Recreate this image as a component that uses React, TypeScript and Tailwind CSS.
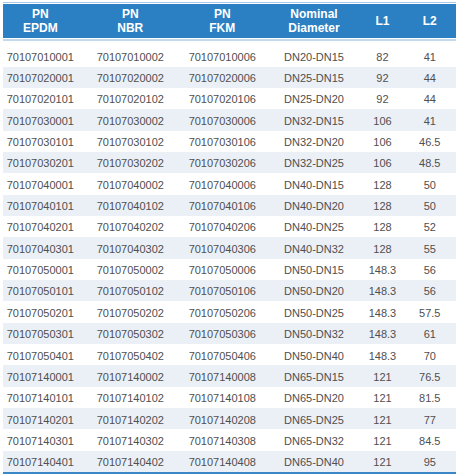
import React from "react";

const rows: string[][] = [
  ["70107010001", "70107010002", "70107010006", "DN20-DN15", "82", "41"],
  ["70107020001", "70107020002", "70107020006", "DN25-DN15", "92", "44"],
  ["70107020101", "70107020102", "70107020106", "DN25-DN20", "92", "44"],
  ["70107030001", "70107030002", "70107030006", "DN32-DN15", "106", "41"],
  ["70107030101", "70107030102", "70107030106", "DN32-DN20", "106", "46.5"],
  ["70107030201", "70107030202", "70107030206", "DN32-DN25", "106", "48.5"],
  ["70107040001", "70107040002", "70107040006", "DN40-DN15", "128", "50"],
  ["70107040101", "70107040102", "70107040106", "DN40-DN20", "128", "50"],
  ["70107040201", "70107040202", "70107040206", "DN40-DN25", "128", "52"],
  ["70107040301", "70107040302", "70107040306", "DN40-DN32", "128", "55"],
  ["70107050001", "70107050002", "70107050006", "DN50-DN15", "148.3", "56"],
  ["70107050101", "70107050102", "70107050106", "DN50-DN20", "148.3", "56"],
  ["70107050201", "70107050202", "70107050206", "DN50-DN25", "148.3", "57.5"],
  ["70107050301", "70107050302", "70107050306", "DN50-DN32", "148.3", "61"],
  ["70107050401", "70107050402", "70107050406", "DN50-DN40", "148.3", "70"],
  ["70107140001", "70107140002", "70107140008", "DN65-DN15", "121", "76.5"],
  ["70107140101", "70107140102", "70107140108", "DN65-DN20", "121", "81.5"],
  ["70107140201", "70107140202", "70107140208", "DN65-DN25", "121", "77"],
  ["70107140301", "70107140302", "70107140308", "DN65-DN32", "121", "84.5"],
  ["70107140401", "70107140402", "70107140408", "DN65-DN40", "121", "95"],
];

const cols = "grid grid-cols-[74.6px_105.4px_78.6px_104.8px_32.2px_57.4px]";

export default function App() {
  return (
    <div
      className="w-[460px] h-[474px] bg-white pl-[3px] pt-[1.5px]"
      style={{ fontFamily: '"Liberation Sans", Arial, sans-serif' }}
    >
      <div className="w-[453px]">
        <div className="h-[1.2px] bg-[#a6c8e6]" />
        <div className="h-[1px]" />
        <div className={`${cols} h-[34px] bg-[#2a80c2] text-white font-bold text-[12px] leading-[13.7px] items-center text-center pt-[2px]`}>
          <div>PN<br />EPDM</div>
          <div>PN<br />NBR</div>
          <div>PN<br />FKM</div>
          <div>Nominal<br />Diameter</div>
          <div>L1</div>
          <div className="pl-[5px]">L2</div>
        </div>
        <div className="h-[1.3px]" />
        <div className="h-[1.7px] bg-[#c2d9ee]" />
        <div className="h-[4.6px]" />
        {rows.map((r, i) => (
          <div
            key={i}
            className={`${cols} h-[21.35px] items-center text-center text-[11px] text-[#4f4f4f] pt-[2px] ${i % 2 === 1 ? "bg-[#ebf0f7]" : "bg-white"}`}
          >
            <div>{r[0]}</div>
            <div>{r[1]}</div>
            <div>{r[2]}</div>
            <div>{r[3]}</div>
            <div>{r[4]}</div>
            <div className="pl-[5px]">{r[5]}</div>
          </div>
        ))}
        <div className="h-[2px] bg-[#3b86c4]" />
      </div>
    </div>
  );
}
